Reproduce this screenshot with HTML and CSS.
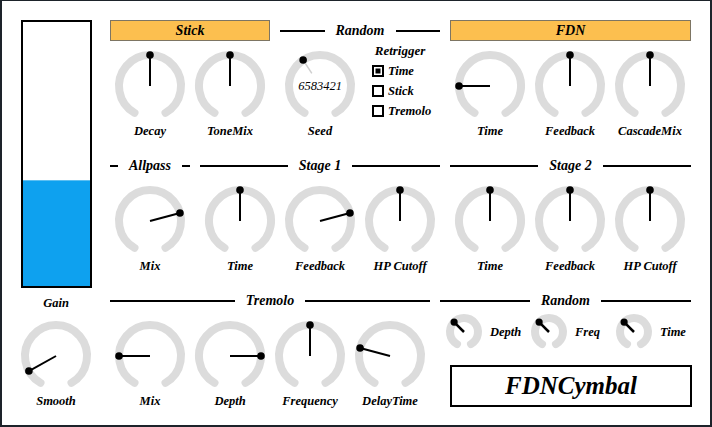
FILE: index.html
```html
<!DOCTYPE html>
<html>
<head>
<meta charset="utf-8">
<link rel="stylesheet" href="styles.css">
</head>
<body>
<div class="panel">
  <div class="left-col">
    <div class="gain-bar"><div class="gain-fill" style="height:39.8%"></div></div>
    <div class="gain-label">Gain</div>
    <div class="knob smooth">
      <svg class="knob-svg" width="80" height="70" viewBox="0 0 80 70"><path class="arc" d="M24.5 61.85A31 31 0 1 1 55.5 61.85"/><line class="ptr" x1="40" y1="35" x2="12.89" y2="50.03"/><circle class="dot" cx="12.89" cy="50.03" r="3.8"/></svg>
      <div class="knob-label">Smooth</div>
    </div>
  </div>

  <div class="main">
    <div class="row">
      <div class="sec w160">
        <div class="box-head">Stick</div>
        <div class="sec-body">
          <div class="knob">
            <svg class="knob-svg" width="80" height="70" viewBox="0 0 80 70"><path class="arc" d="M24.5 61.85A31 31 0 1 1 55.5 61.85"/><line class="ptr" x1="40" y1="35" x2="40" y2="4"/><circle class="dot" cx="40" cy="4" r="3.8"/></svg>
            <div class="knob-label">Decay</div>
          </div>
          <div class="knob">
            <svg class="knob-svg" width="80" height="70" viewBox="0 0 80 70"><path class="arc" d="M24.5 61.85A31 31 0 1 1 55.5 61.85"/><line class="ptr" x1="40" y1="35" x2="40" y2="4"/><circle class="dot" cx="40" cy="4" r="3.8"/></svg>
            <div class="knob-label">ToneMix</div>
          </div>
        </div>
      </div>
      <div class="sec w160">
        <div class="line-head"><span>Random</span></div>
        <div class="sec-body">
          <div class="knob">
            <svg class="knob-svg" width="80" height="70" viewBox="0 0 80 70"><path class="arc" d="M24.5 61.85A31 31 0 1 1 55.5 61.85"/><line class="ptr-light" x1="31.83" y1="22.42" x2="23.12" y2="9"/><circle class="dot" cx="23.12" cy="9" r="3.8"/><text class="seed-val" x="40" y="39" text-anchor="middle">6583421</text></svg>
            <div class="knob-label">Seed</div>
          </div>
          <div class="retrig">
            <div class="retrig-title">Retrigger</div>
            <div class="chk-list">
              <div class="chk-row"><span class="chk on"></span><span>Time</span></div>
              <div class="chk-row"><span class="chk"></span><span>Stick</span></div>
              <div class="chk-row"><span class="chk"></span><span>Tremolo</span></div>
            </div>
          </div>
        </div>
      </div>
      <div class="sec w241">
        <div class="box-head">FDN</div>
        <div class="sec-body">
          <div class="knob">
            <svg class="knob-svg" width="80" height="70" viewBox="0 0 80 70"><path class="arc" d="M24.5 61.85A31 31 0 1 1 55.5 61.85"/><line class="ptr" x1="40" y1="35" x2="9" y2="35"/><circle class="dot" cx="9" cy="35" r="3.8"/></svg>
            <div class="knob-label">Time</div>
          </div>
          <div class="knob">
            <svg class="knob-svg" width="80" height="70" viewBox="0 0 80 70"><path class="arc" d="M24.5 61.85A31 31 0 1 1 55.5 61.85"/><line class="ptr" x1="40" y1="35" x2="40" y2="4"/><circle class="dot" cx="40" cy="4" r="3.8"/></svg>
            <div class="knob-label">Feedback</div>
          </div>
          <div class="knob">
            <svg class="knob-svg" width="80" height="70" viewBox="0 0 80 70"><path class="arc" d="M24.5 61.85A31 31 0 1 1 55.5 61.85"/><line class="ptr" x1="40" y1="35" x2="40" y2="4"/><circle class="dot" cx="40" cy="4" r="3.8"/></svg>
            <div class="knob-label">CascadeMix</div>
          </div>
        </div>
      </div>
    </div>

    <div class="row">
      <div class="sec w80">
        <div class="line-head"><span>Allpass</span></div>
        <div class="sec-body">
          <div class="knob">
            <svg class="knob-svg" width="80" height="70" viewBox="0 0 80 70"><path class="arc" d="M24.5 61.85A31 31 0 1 1 55.5 61.85"/><line class="ptr" x1="40" y1="35" x2="69.94" y2="26.98"/><circle class="dot" cx="69.94" cy="26.98" r="3.8"/></svg>
            <div class="knob-label">Mix</div>
          </div>
        </div>
      </div>
      <div class="sec w240">
        <div class="line-head"><span>Stage 1</span></div>
        <div class="sec-body">
          <div class="knob">
            <svg class="knob-svg" width="80" height="70" viewBox="0 0 80 70"><path class="arc" d="M24.5 61.85A31 31 0 1 1 55.5 61.85"/><line class="ptr" x1="40" y1="35" x2="40" y2="4"/><circle class="dot" cx="40" cy="4" r="3.8"/></svg>
            <div class="knob-label">Time</div>
          </div>
          <div class="knob">
            <svg class="knob-svg" width="80" height="70" viewBox="0 0 80 70"><path class="arc" d="M24.5 61.85A31 31 0 1 1 55.5 61.85"/><line class="ptr" x1="40" y1="35" x2="69.94" y2="26.98"/><circle class="dot" cx="69.94" cy="26.98" r="3.8"/></svg>
            <div class="knob-label">Feedback</div>
          </div>
          <div class="knob">
            <svg class="knob-svg" width="80" height="70" viewBox="0 0 80 70"><path class="arc" d="M24.5 61.85A31 31 0 1 1 55.5 61.85"/><line class="ptr" x1="40" y1="35" x2="40" y2="4"/><circle class="dot" cx="40" cy="4" r="3.8"/></svg>
            <div class="knob-label">HP Cutoff</div>
          </div>
        </div>
      </div>
      <div class="sec w241">
        <div class="line-head"><span>Stage 2</span></div>
        <div class="sec-body">
          <div class="knob">
            <svg class="knob-svg" width="80" height="70" viewBox="0 0 80 70"><path class="arc" d="M24.5 61.85A31 31 0 1 1 55.5 61.85"/><line class="ptr" x1="40" y1="35" x2="40" y2="4"/><circle class="dot" cx="40" cy="4" r="3.8"/></svg>
            <div class="knob-label">Time</div>
          </div>
          <div class="knob">
            <svg class="knob-svg" width="80" height="70" viewBox="0 0 80 70"><path class="arc" d="M24.5 61.85A31 31 0 1 1 55.5 61.85"/><line class="ptr" x1="40" y1="35" x2="40" y2="4"/><circle class="dot" cx="40" cy="4" r="3.8"/></svg>
            <div class="knob-label">Feedback</div>
          </div>
          <div class="knob">
            <svg class="knob-svg" width="80" height="70" viewBox="0 0 80 70"><path class="arc" d="M24.5 61.85A31 31 0 1 1 55.5 61.85"/><line class="ptr" x1="40" y1="35" x2="40" y2="4"/><circle class="dot" cx="40" cy="4" r="3.8"/></svg>
            <div class="knob-label">HP Cutoff</div>
          </div>
        </div>
      </div>
    </div>

    <div class="row">
      <div class="sec w320">
        <div class="line-head"><span>Tremolo</span></div>
        <div class="sec-body">
          <div class="knob">
            <svg class="knob-svg" width="80" height="70" viewBox="0 0 80 70"><path class="arc" d="M24.5 61.85A31 31 0 1 1 55.5 61.85"/><line class="ptr" x1="40" y1="35" x2="9" y2="35"/><circle class="dot" cx="9" cy="35" r="3.8"/></svg>
            <div class="knob-label">Mix</div>
          </div>
          <div class="knob">
            <svg class="knob-svg" width="80" height="70" viewBox="0 0 80 70"><path class="arc" d="M24.5 61.85A31 31 0 1 1 55.5 61.85"/><line class="ptr" x1="40" y1="35" x2="71" y2="35"/><circle class="dot" cx="71" cy="35" r="3.8"/></svg>
            <div class="knob-label">Depth</div>
          </div>
          <div class="knob">
            <svg class="knob-svg" width="80" height="70" viewBox="0 0 80 70"><path class="arc" d="M24.5 61.85A31 31 0 1 1 55.5 61.85"/><line class="ptr" x1="40" y1="35" x2="40" y2="4"/><circle class="dot" cx="40" cy="4" r="3.8"/></svg>
            <div class="knob-label">Frequency</div>
          </div>
          <div class="knob">
            <svg class="knob-svg" width="80" height="70" viewBox="0 0 80 70"><path class="arc" d="M24.5 61.85A31 31 0 1 1 55.5 61.85"/><line class="ptr" x1="40" y1="35" x2="10.06" y2="26.98"/><circle class="dot" cx="10.06" cy="26.98" r="3.8"/></svg>
            <div class="knob-label">DelayTime</div>
          </div>
        </div>
      </div>
      <div class="sec w251">
        <div class="line-head"><span>Random</span></div>
        <div class="mini-grid">
          <div class="mini">
            <svg width="40" height="40" viewBox="0 0 40 40"><path class="arc mini-arc" d="M13 32.12A14 14 0 1 1 27 32.12"/><line class="ptr mini-ptr" x1="20" y1="20" x2="10.1" y2="10.1"/><circle class="dot" cx="10.1" cy="10.1" r="3.6"/></svg>
            <span class="mini-label">Depth</span>
          </div>
          <div class="mini">
            <svg width="40" height="40" viewBox="0 0 40 40"><path class="arc mini-arc" d="M13 32.12A14 14 0 1 1 27 32.12"/><line class="ptr mini-ptr" x1="20" y1="20" x2="10.1" y2="10.1"/><circle class="dot" cx="10.1" cy="10.1" r="3.6"/></svg>
            <span class="mini-label">Freq</span>
          </div>
          <div class="mini">
            <svg width="40" height="40" viewBox="0 0 40 40"><path class="arc mini-arc" d="M13 32.12A14 14 0 1 1 27 32.12"/><line class="ptr mini-ptr" x1="20" y1="20" x2="10.1" y2="10.1"/><circle class="dot" cx="10.1" cy="10.1" r="3.6"/></svg>
            <span class="mini-label">Time</span>
          </div>
        </div>
        <div class="title-box">FDNCymbal</div>
      </div>
    </div>
  </div>
</div>
</body>
</html>
```

FILE: styles.css
```css
html, body {
  margin: 0;
  padding: 0;
  background: #ffffff;
}

body {
  font-family: "Liberation Serif", "Times New Roman", serif;
  font-weight: bold;
  font-style: italic;
  color: #000;
}

.panel {
  box-sizing: border-box;
  width: 712px;
  height: 427px;
  border-style: solid;
  border-color: #1d232a;
  border-width: 1px 2px 2px 2px;
  padding: 19px 0 0 14px;
  display: flex;
  gap: 14px;
  overflow: hidden;
}

.left-col {
  width: 80px;
  display: flex;
  flex-direction: column;
  align-items: center;
}

.gain-bar {
  box-sizing: border-box;
  width: 71px;
  height: 268px;
  border: 2px solid #000;
  display: flex;
  flex-direction: column;
  justify-content: flex-end;
}

.gain-fill {
  background: #0ea1ef;
  border-top: 1px solid #5cbff2;
}

.gain-label {
  margin-top: 8px;
  font-size: 12.5px;
  line-height: 14px;
}

.main {
  width: 581px;
  display: flex;
  flex-direction: column;
  gap: 17px;
}

.row {
  display: flex;
  gap: 10px;
}

.sec {
  display: flex;
  flex-direction: column;
}

.w80 { width: 80px; }
.w160 { width: 160px; }
.w240 { width: 240px; }
.w241 { width: 241px; }
.w251 { width: 251px; }
.w320 { width: 320px; }

.box-head {
  box-sizing: border-box;
  height: 21px;
  background: #fcbf4f;
  border: 1px solid #7d7563;
  text-align: center;
  font-size: 14px;
  line-height: 19px;
}

.line-head {
  height: 21px;
  display: flex;
  align-items: center;
  font-size: 14px;
  line-height: 21px;
}

.line-head::before,
.line-head::after {
  content: "";
  flex: 1;
  height: 2px;
  background: #000;
}

.line-head span {
  padding: 0 11px;
  white-space: nowrap;
}

.sec-body {
  display: flex;
}

.knob {
  width: 80px;
  padding-top: 10px;
  display: flex;
  flex-direction: column;
  align-items: center;
}

.knob.smooth {
  padding-top: 11px;
}

.knob-svg {
  display: block;
  overflow: visible;
}

.knob-label {
  margin-top: 3px;
  font-size: 12.5px;
  line-height: 14px;
  white-space: nowrap;
}

.arc {
  fill: none;
  stroke: #dcdcdc;
  stroke-width: 8;
  stroke-linecap: round;
}

.ptr {
  stroke: #000;
  stroke-width: 2;
}

.ptr-light {
  stroke: #cfcfcf;
  stroke-width: 1.5;
}

.dot {
  fill: #000;
}

.seed-val {
  font-family: "Liberation Serif", "Times New Roman", serif;
  font-style: italic;
  font-weight: normal;
  font-size: 12.5px;
  fill: #000;
}

.retrig {
  width: 80px;
  padding-top: 3px;
  display: flex;
  flex-direction: column;
}

.retrig-title {
  text-align: center;
  font-size: 13px;
  line-height: 14px;
}

.chk-list {
  margin-top: 3px;
  display: flex;
  flex-direction: column;
}

.chk-row {
  height: 20px;
  display: flex;
  align-items: center;
  gap: 4px;
  padding-left: 12px;
  font-size: 12.5px;
}

.chk {
  box-sizing: border-box;
  width: 12px;
  height: 12px;
  border: 2px solid #000;
  background: #fff;
}

.chk.on {
  background: #000;
  box-shadow: inset 0 0 0 1.5px #fff;
}

.mini-grid {
  margin-top: 1px;
  padding-left: 4px;
  display: grid;
  grid-template-columns: 85px 85px 77px;
}

.mini {
  display: flex;
  align-items: center;
  gap: 6px;
}

.mini svg {
  display: block;
  overflow: visible;
}

.mini-arc {
  stroke-width: 8;
}

.mini-ptr {
  stroke-width: 2.5;
}

.mini-label {
  font-size: 12.5px;
  line-height: 14px;
}

.title-box {
  box-sizing: border-box;
  margin: 13px 0 0 10px;
  width: 242px;
  height: 42px;
  border: 2px solid #000;
  text-align: center;
  font-size: 25px;
  line-height: 38px;
}
```
